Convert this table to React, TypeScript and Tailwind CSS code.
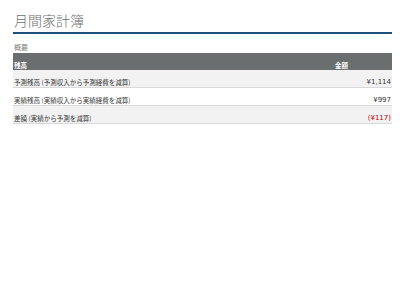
export default function App() {
  const jp = { fontFamily: '"Noto Sans CJK JP", "Noto Sans", sans-serif' };
  const num = { fontFamily: '"DejaVu Sans", Verdana, sans-serif' };
  const rows = [
    { label: "予測残高 (予測収入から予測経費を減算)", value: "¥1,114", bg: "bg-[#f2f2f2]", red: false },
    { label: "実績残高 (実績収入から実績経費を減算)", value: "¥997", bg: "bg-white", red: false },
    { label: "差額 (実績から予測を減算)", value: "(¥117)", bg: "bg-[#f2f2f2]", red: true },
  ];
  return (
    <div className="w-[400px] h-[308px] bg-white pl-[13px] pr-[8px] pt-[10px]" style={jp}>
      <div className="text-[14px] leading-[21px] font-light text-[#6f6f6f] pl-[1px]">月間家計簿</div>
      <div className="h-[2px] bg-[#1f4e79] mt-[1px]" />
      <div className="text-[7px] leading-[10px] text-[#7f7f7f] mt-[8px] pl-[1px]">概要</div>
      <div className="mt-[1px] h-[17px] bg-[#6b6e6e] flex items-end pb-[1px] text-[6.5px] leading-[8px] font-bold text-white">
        <div className="flex-1 pl-[1px]">残高</div>
        <div className="w-[57px]">金額</div>
      </div>
      {rows.map((r) => (
        <div
          key={r.label}
          className={`h-[18px] ${r.bg} border-b border-[#d9d9d9] flex items-end pb-[1px] text-[6.5px] leading-[8px] text-[#333333]`}
        >
          <div className="flex-1 pl-[1px]">{r.label}</div>
          <div className={`pr-[1px] text-[7px] ${r.red ? "text-[#c00000]" : "text-[#333333]"}`} style={num}>
            {r.value}
          </div>
        </div>
      ))}
    </div>
  );
}
